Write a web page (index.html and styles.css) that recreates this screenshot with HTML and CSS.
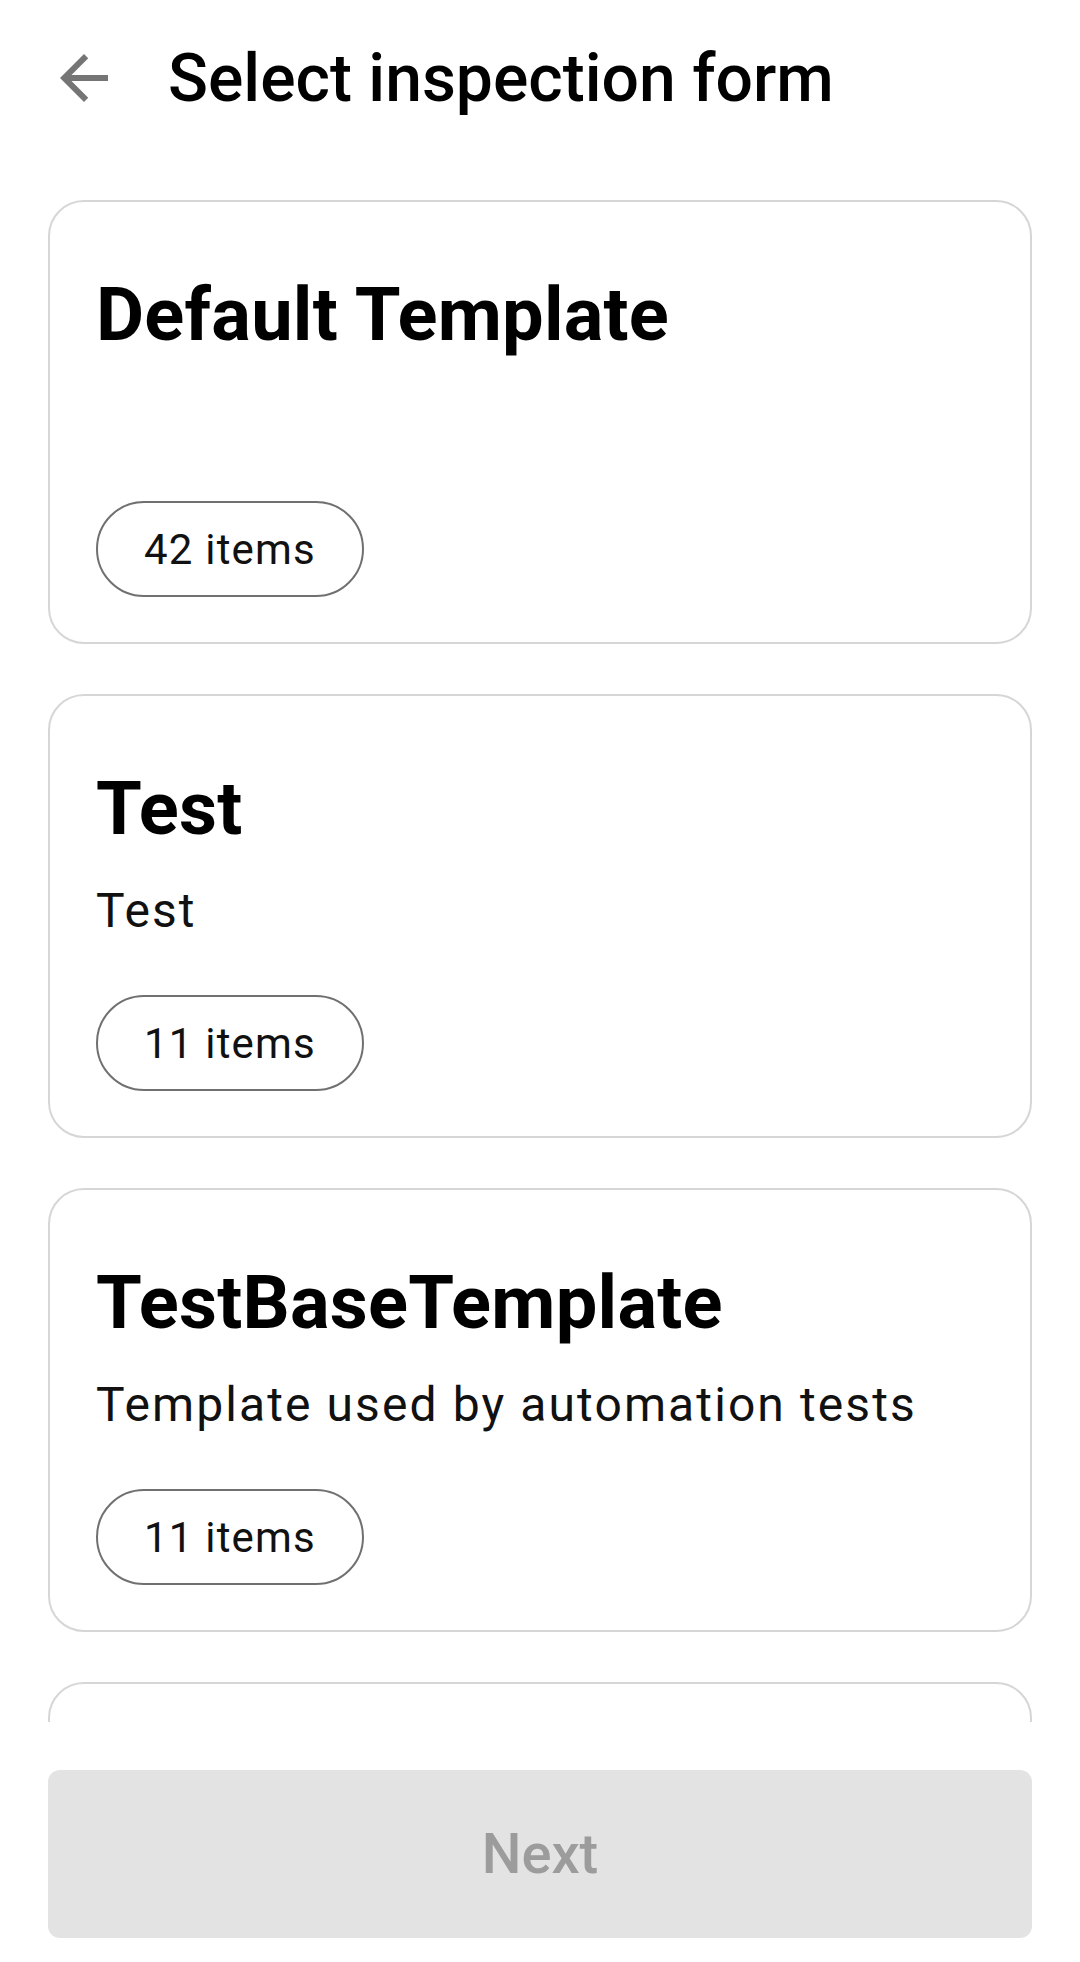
FILE: index.html
```html
<!DOCTYPE html>
<html lang="en">
<head>
<meta charset="utf-8">
<title>Select inspection form</title>
<link rel="stylesheet" href="styles.css">
</head>
<body>
<div class="screen">
  <header class="topbar">
    <button class="back" aria-label="Back">
      <svg viewBox="0 0 24 24" width="72" height="72"><path d="M20 11H7.83l5.59-5.59L12 4l-8 8 8 8 1.41-1.41L7.83 13H20v-2z"/></svg>
    </button>
    <h1 class="page-title">Select inspection form</h1>
  </header>
  <main class="list">
    <section class="card">
      <h2 class="card-title">Default Template</h2>
      <p class="card-desc"></p>
      <span class="chip">42 items</span>
    </section>
    <section class="card">
      <h2 class="card-title">Test</h2>
      <p class="card-desc">Test</p>
      <span class="chip">11 items</span>
    </section>
    <section class="card">
      <h2 class="card-title">TestBaseTemplate</h2>
      <p class="card-desc">Template used by automation tests</p>
      <span class="chip">11 items</span>
    </section>
    <section class="card">
      <h2 class="card-title">&nbsp;</h2>
      <p class="card-desc"></p>
      <span class="chip">&nbsp;</span>
    </section>
  </main>
  <footer class="footer">
    <button class="next" disabled>Next</button>
  </footer>
</div>
</body>
</html>
```
FILE: styles.css
```css
* { box-sizing: border-box; }
html, body {
  margin: 0;
  padding: 0;
  background: #ffffff;
}
body {
  font-family: Roboto, "Noto Sans", "Liberation Sans", sans-serif;
  color: #000000;
}
.screen {
  width: 1080px;
  height: 1962px;
  display: flex;
  flex-direction: column;
  overflow: hidden;
}
.topbar {
  height: 156px;
  flex: 0 0 156px;
  display: flex;
  align-items: center;
  padding-left: 48px;
  gap: 48px;
}
.back {
  width: 72px;
  height: 72px;
  padding: 0;
  border: 0;
  background: none;
  display: flex;
}
.back svg { fill: #757575; }
.page-title {
  margin: 0;
  font-size: 66px;
  font-weight: 500;
  line-height: 79px;
  color: #000000;
}
.list {
  flex: 1 1 auto;
  min-height: 0;
  overflow: hidden;
  padding: 44px 48px 0;
  display: flex;
  flex-direction: column;
  gap: 50px;
}
.card {
  flex: 0 0 auto;
  border: 2px solid #d6d6d6;
  border-radius: 36px;
  padding: 69px 46px 45px;
  display: flex;
  flex-direction: column;
  align-items: flex-start;
}
.card-title {
  margin: 0;
  font-size: 74px;
  font-weight: 700;
  line-height: 88px;
  letter-spacing: 0.25px;
}
.card-desc {
  margin: 27px 0 0;
  min-height: 62px;
  font-size: 48px;
  line-height: 62px;
  letter-spacing: 2.1px;
  color: #111111;
}
.chip {
  margin-top: 53px;
  height: 96px;
  padding: 0 46px;
  border: 2.5px solid #707070;
  border-radius: 48px;
  display: inline-flex;
  align-items: center;
  font-size: 42px;
  letter-spacing: 1.2px;
  color: #111111;
}
.footer {
  flex: 0 0 auto;
  padding: 48px 48px 24px;
}
.next {
  width: 100%;
  height: 168px;
  border: 0;
  border-radius: 12px;
  background: #e3e3e3;
  color: #9c9c9c;
  font-family: Roboto, "Noto Sans", "Liberation Sans", sans-serif;
  font-size: 56px;
  font-weight: 500;
  padding: 0;
}
```
